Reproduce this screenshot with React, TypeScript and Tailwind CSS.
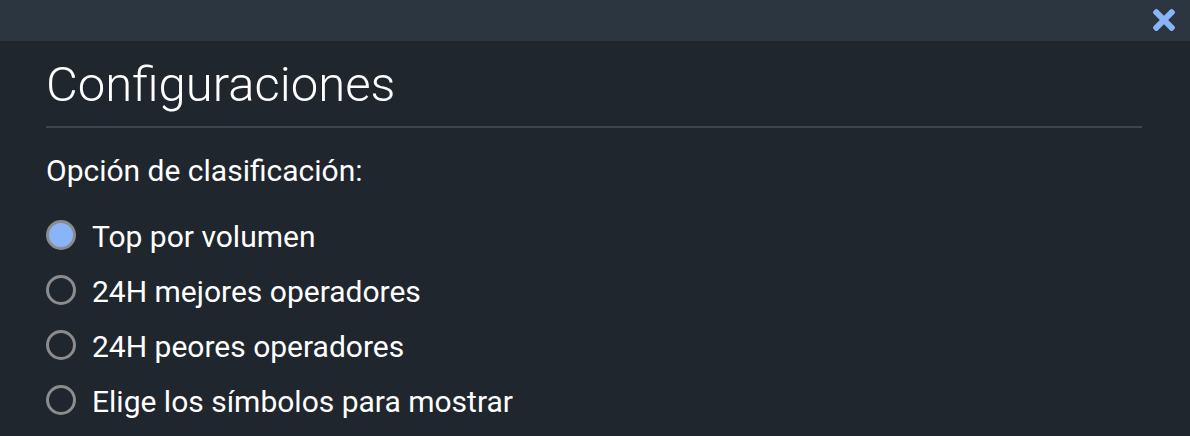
import { FaTimes } from 'react-icons/fa';

const options = [
  { label: 'Top por volumen', selected: true },
  { label: '24H mejores operadores', selected: false },
  { label: '24H peores operadores', selected: false },
  { label: 'Elige los símbolos para mostrar', selected: false },
];

export default function App() {
  return (
    <div className="w-[1190px] h-[436px] bg-[#1f262d] overflow-hidden" style={{ fontFamily: 'Roboto, "Noto Sans", sans-serif' }}>
      <div className="h-[41px] bg-[#2b3640] flex items-start justify-end pr-[15px] pt-[4px]">
        <FaTimes className="text-[#8ab4f8] w-[22px] h-[32px]" />
      </div>
      <div className="pl-[46px] pr-[48px]">
        <h1 className="text-[49px] font-light text-white leading-none pt-[19px] pb-[17px]">Configuraciones</h1>
        <div className="h-[2px] bg-[#3d444b]" />
        <p className="text-[30px] text-white mt-[28px] leading-none">Opción de clasificación:</p>
        <div className="mt-[34px] flex flex-col gap-[25px]">
          {options.map((o) => (
            <label key={o.label} className="flex items-center gap-[16px] h-[30px]">
              <span
                className={
                  o.selected
                    ? 'w-[30px] h-[30px] rounded-full border-[3px] border-[#8c8c8c] bg-[#8ab4f8] shrink-0'
                    : 'w-[30px] h-[30px] rounded-full border-[3px] border-[#8c8c8c] shrink-0'
                }
              />
              <span className="text-[30px] text-white leading-none pt-[3px]">{o.label}</span>
            </label>
          ))}
        </div>
      </div>
    </div>
  );
}
